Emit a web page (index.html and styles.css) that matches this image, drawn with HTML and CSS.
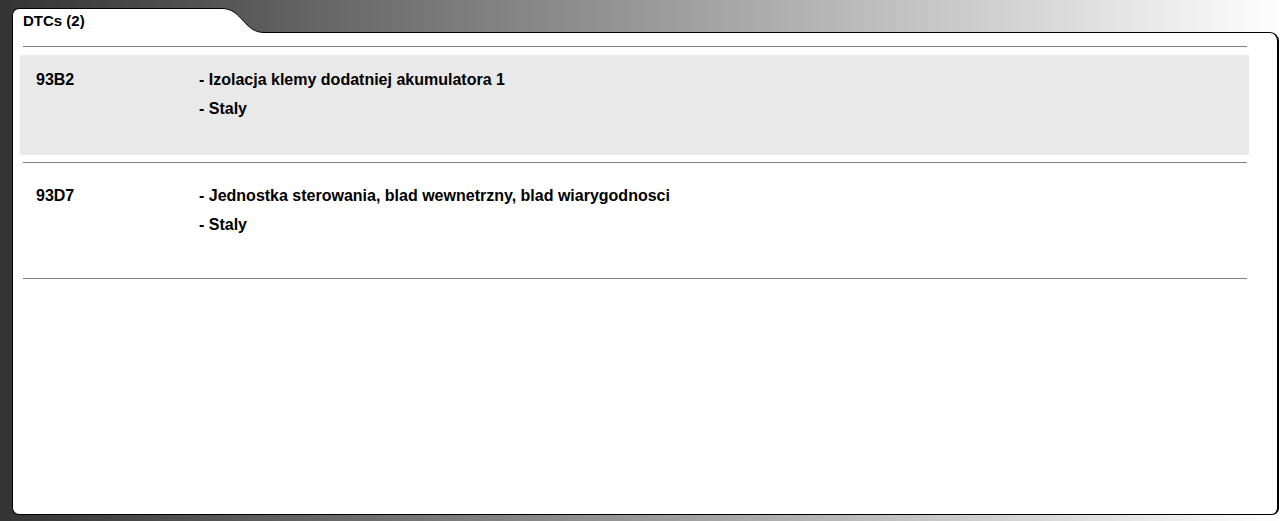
FILE: index.html
```html
<!DOCTYPE html>
<html>
<head>
<meta charset="utf-8">
<link rel="stylesheet" href="styles.css">
</head>
<body>
<div class="screen">
  <div class="tabs">
    <div class="tab">DTCs (2)</div>
    <svg class="tab-curve" width="42" height="25" viewBox="0 0 42 25">
      <path d="M0 0.5 C 20 0.5, 22 24.5, 42 24.5 L42 25 L0 25 Z" fill="#fff"/>
      <path d="M0 0.5 C 20 0.5, 22 24.5, 42 24.5" fill="none" stroke="#000" stroke-width="1"/>
    </svg>
    <div class="tab-fill"></div>
  </div>
  <div class="panel">
    <div class="dtc-list">
      <div class="rule"></div>
      <div class="dtc alt">
        <div class="code">93B2</div>
        <div class="desc">
          <div class="line">- Izolacja klemy dodatniej akumulatora 1</div>
          <div class="line">- Staly</div>
        </div>
      </div>
      <div class="rule"></div>
      <div class="dtc">
        <div class="code">93D7</div>
        <div class="desc">
          <div class="line">- Jednostka sterowania, blad wewnetrzny, blad wiarygodnosci</div>
          <div class="line">- Staly</div>
        </div>
      </div>
      <div class="rule"></div>
    </div>
  </div>
</div>
</body>
</html>
```

FILE: styles.css
```css
html, body {
  margin: 0;
  padding: 0;
}
body {
  font-family: "Liberation Sans", Arial, sans-serif;
  color: #000;
}
.screen {
  width: 1288px;
  height: 521px;
  box-sizing: border-box;
  padding: 8px 9px 6px 12px;
  background: linear-gradient(to right, #333333 0%, #ffffff 100%);
  display: flex;
  flex-direction: column;
}
.tabs {
  height: 25px;
  margin-bottom: -1px;
  display: flex;
  position: relative;
  z-index: 1;
}
.tab {
  width: 210px;
  box-sizing: border-box;
  background: #fff;
  border-top: 1px solid #000;
  border-left: 1px solid #000;
  border-top-left-radius: 7px;
  padding: 3px 0 0 10px;
  font-size: 15px;
  font-weight: bold;
  line-height: 17px;
}
.tab-curve {
  display: block;
  flex: none;
}
.tab-fill {
  flex: 1;
}
.panel {
  flex: 1;
  background: #fff;
  border: 1px solid #000;
  border-right-width: 2px;
  border-radius: 0 9px 7px 7px;
}
.dtc-list {
  padding: 13px 28px 0 7px;
}
.rule {
  height: 1px;
  background: #808080;
  margin: 0 2px 0 3px;
}
.dtc {
  display: flex;
  height: 100px;
  box-sizing: border-box;
  margin: 8px 0 7px;
  padding: 10px 16px;
  font-size: 16px;
  font-weight: bold;
  line-height: 29px;
}
.dtc.alt {
  background: #e9e9e9;
}
.code {
  width: 163px;
  flex: none;
}
```
